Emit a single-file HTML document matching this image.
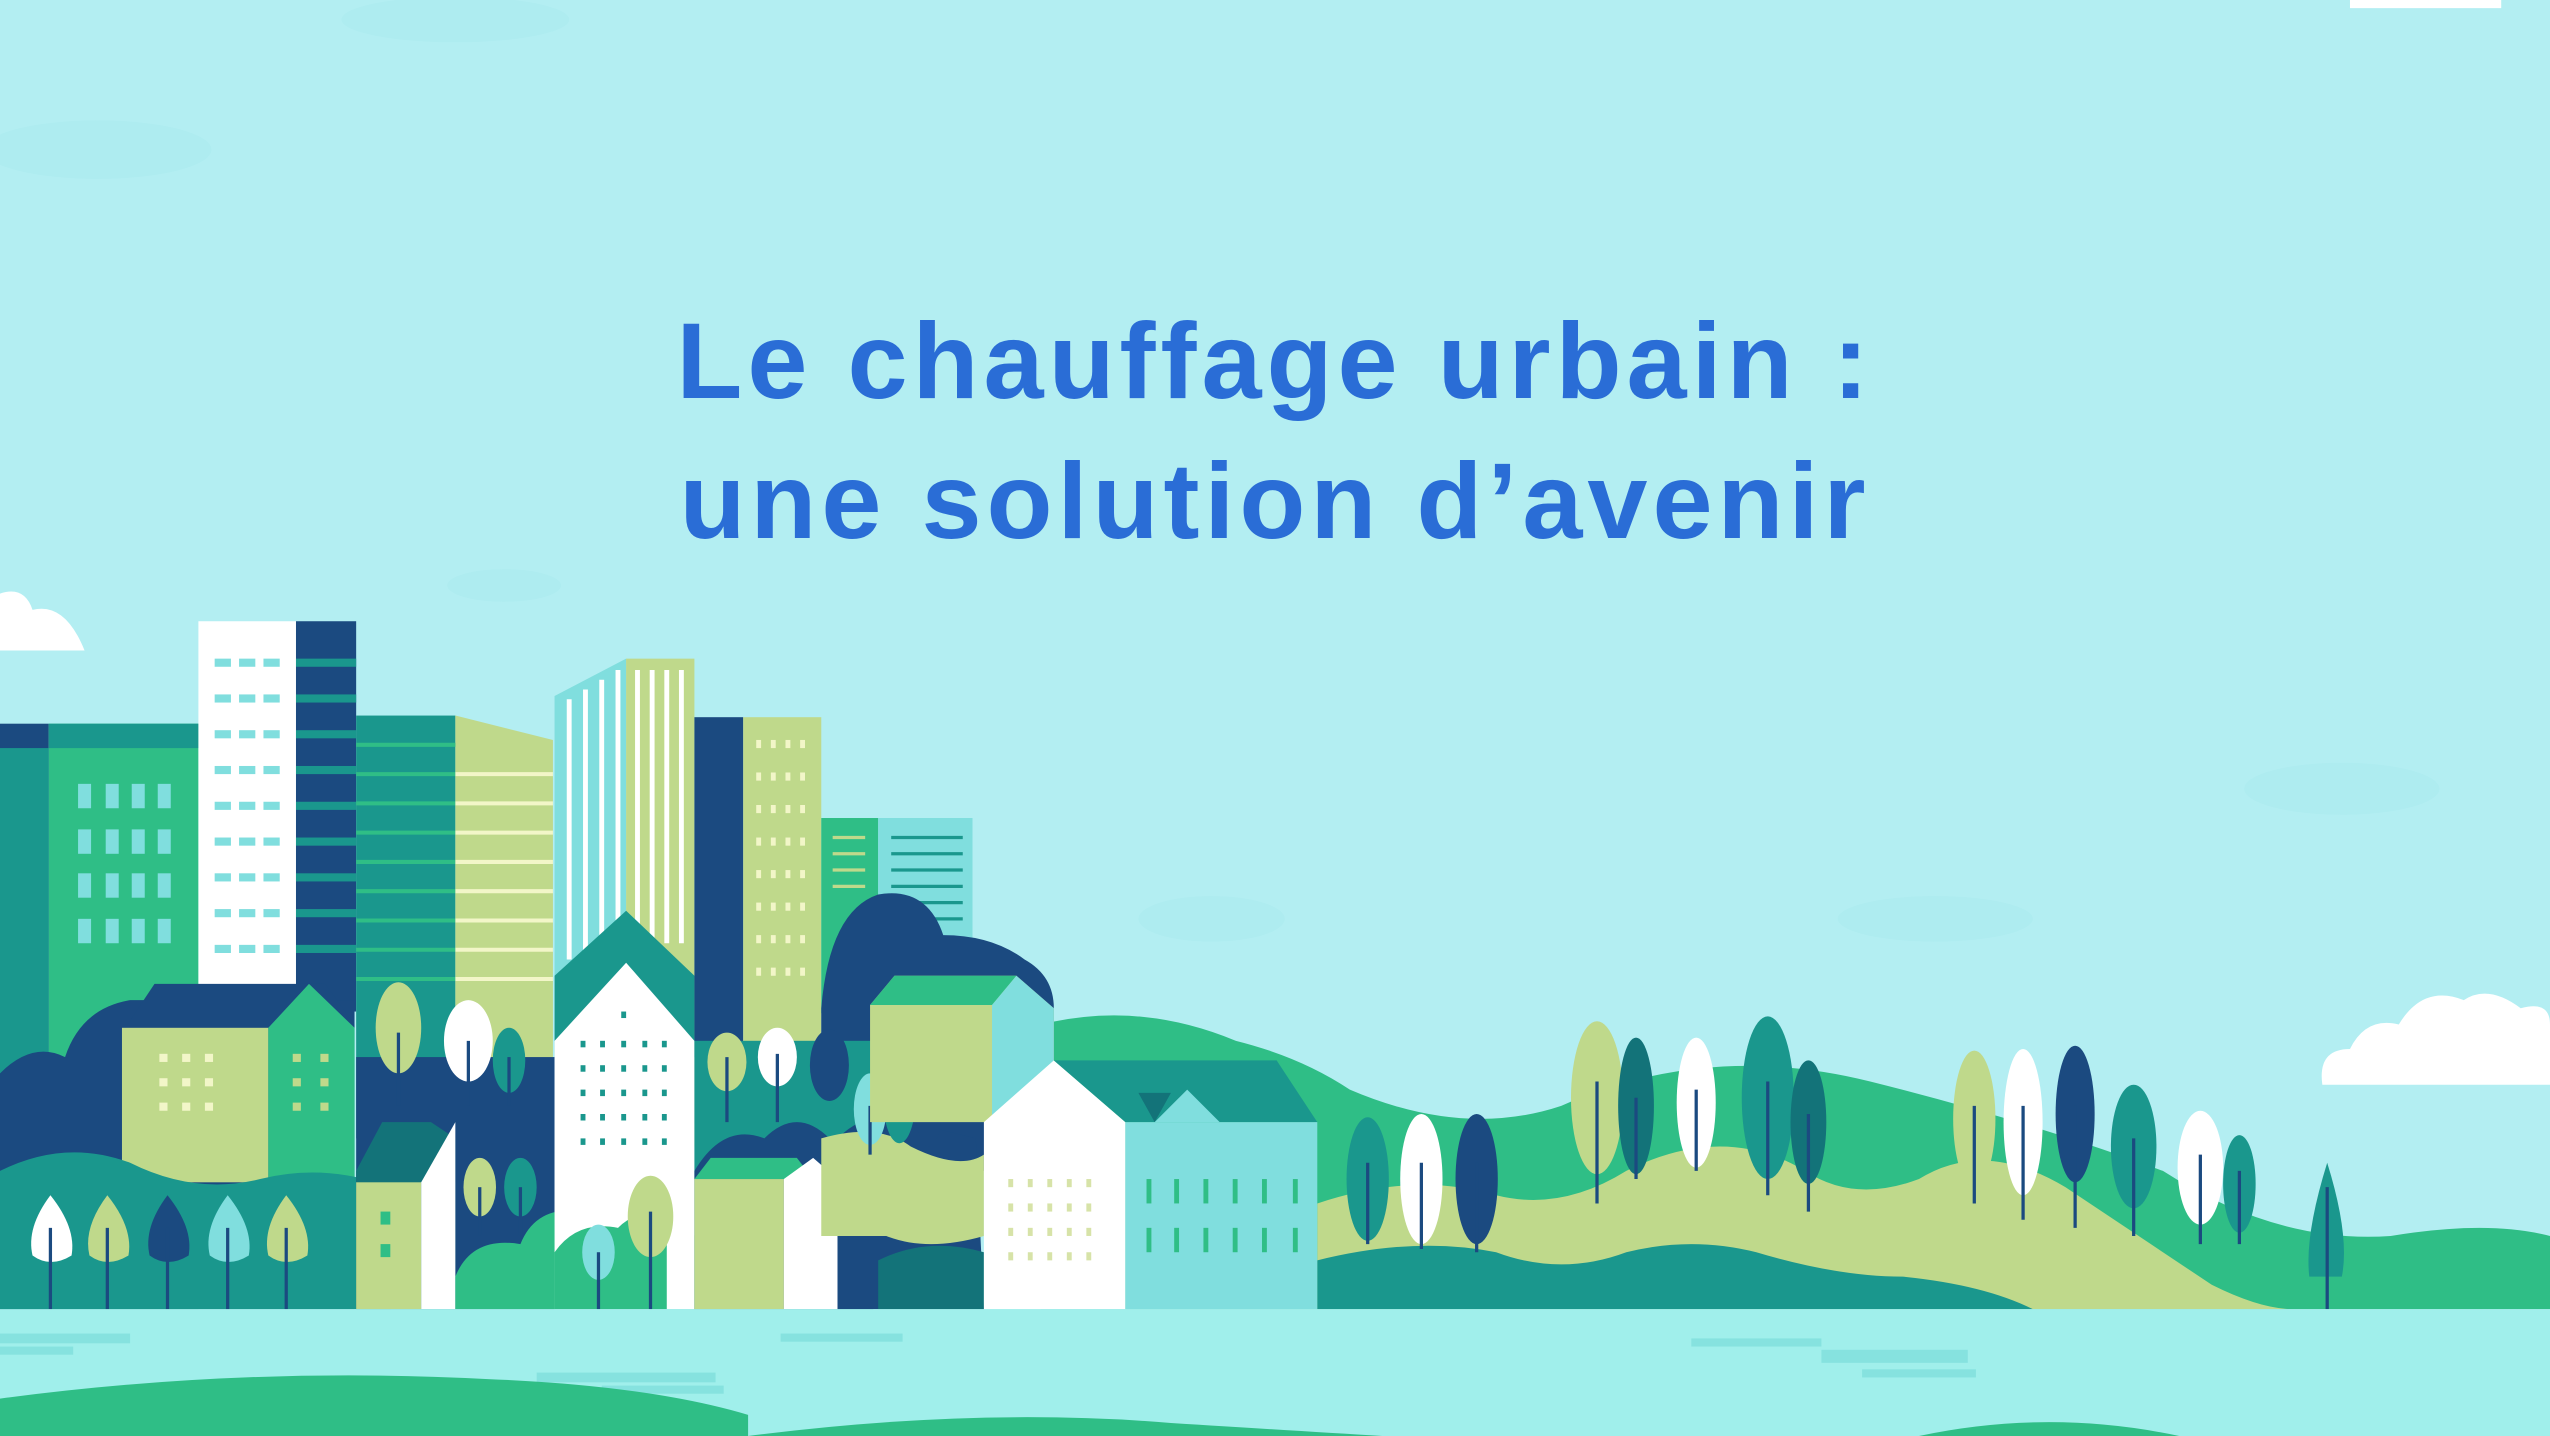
<!DOCTYPE html>
<html><head><meta charset="utf-8"><style>
html,body{margin:0;padding:0;width:2550px;height:1436px;overflow:hidden;background:#b3eef2}
svg{position:absolute;left:0;top:0}
.tr line{stroke:#1b4a80;stroke-width:2}
.t{position:absolute;left:0;width:2550px;text-align:center;font-family:"Liberation Sans",sans-serif;font-weight:bold;color:#2a6dd6;font-size:108px;letter-spacing:5px}
</style></head><body>
<svg width="2550" height="1436" viewBox="0 0 1568 883" preserveAspectRatio="none">
<rect width="1568" height="883" fill="#b3eef2"/>
<g fill="#aeecf0"><ellipse cx="60" cy="92" rx="70" ry="18"/><ellipse cx="280" cy="12" rx="70" ry="14"/><ellipse cx="1440" cy="485" rx="60" ry="16"/><ellipse cx="1190" cy="565" rx="60" ry="14"/><ellipse cx="745" cy="565" rx="45" ry="14"/><ellipse cx="310" cy="360" rx="35" ry="10"/></g>
<g fill="#fff"><path d="M0 400 L0 365 Q15 360 20 375 Q40 370 52 400Z"/><path d="M1428 667 Q1425 645 1445 645 Q1455 625 1475 630 Q1490 605 1515 615 Q1530 605 1550 620 Q1568 615 1568 630 L1568 667Z"/><rect x="1445" y="0" width="93" height="5"/></g>
<path d="M640 630 Q700 615 760 640 Q800 650 830 670 Q900 700 960 680 Q1050 640 1150 665 Q1250 690 1330 720 Q1400 765 1470 760 Q1530 750 1568 760 L1568 805 L640 805Z" fill="#2fbe86"/>
<path d="M810 740 Q870 720 920 735 Q960 745 1000 720 Q1060 690 1110 720 Q1140 740 1180 725 Q1220 700 1270 730 Q1330 770 1360 790 Q1390 805 1410 805 L810 805Z" fill="#bfd98b"/>
<path d="M810 775 Q870 760 920 770 Q960 785 1000 770 Q1040 760 1080 770 Q1130 785 1170 785 Q1220 790 1250 805 L810 805Z" fill="#1a978d"/>
<g class="tr">
<g><ellipse cx="841" cy="725" rx="13" ry="38" fill="#1a978d"/><line x1="841" y1="715" x2="841" y2="765"/></g>
<g><ellipse cx="874" cy="725" rx="13" ry="40" fill="#fff"/><line x1="874" y1="715" x2="874" y2="768"/></g>
<g><ellipse cx="908" cy="725" rx="13" ry="40" fill="#1b4a80"/><line x1="908" y1="715" x2="908" y2="770"/></g>
<g><ellipse cx="982" cy="675" rx="16" ry="47" fill="#bfd98b"/><line x1="982" y1="665" x2="982" y2="740"/></g>
<g><ellipse cx="1006" cy="680" rx="11" ry="42" fill="#137379"/><line x1="1006" y1="675" x2="1006" y2="725"/></g>
<g><ellipse cx="1043" cy="678" rx="12" ry="40" fill="#fff"/><line x1="1043" y1="670" x2="1043" y2="720"/></g>
<g><ellipse cx="1087" cy="675" rx="16" ry="50" fill="#1a978d"/><line x1="1087" y1="665" x2="1087" y2="735"/></g>
<g><ellipse cx="1112" cy="690" rx="11" ry="38" fill="#137379"/><line x1="1112" y1="685" x2="1112" y2="745"/></g>
<g><ellipse cx="1214" cy="688" rx="13" ry="42" fill="#bfd98b"/><line x1="1214" y1="680" x2="1214" y2="740"/></g>
<g><ellipse cx="1244" cy="690" rx="12" ry="45" fill="#fff"/><line x1="1244" y1="680" x2="1244" y2="750"/></g>
<g><ellipse cx="1276" cy="685" rx="12" ry="42" fill="#1b4a80"/><line x1="1276" y1="680" x2="1276" y2="755"/></g>
<g><ellipse cx="1312" cy="705" rx="14" ry="38" fill="#1a978d"/><line x1="1312" y1="700" x2="1312" y2="760"/></g>
<g><ellipse cx="1353" cy="718" rx="14" ry="35" fill="#fff"/><line x1="1353" y1="710" x2="1353" y2="765"/></g>
<g><ellipse cx="1377" cy="728" rx="10" ry="30" fill="#1a978d"/><line x1="1377" y1="720" x2="1377" y2="765"/></g>
<g><path d="M1431 715 Q1445 760 1440 785 L1420 785 Q1417 760 1431 715Z" fill="#1a978d"/><line x1="1431" y1="730" x2="1431" y2="805"/></g>
</g>
<rect x="0" y="445" width="30" height="360" fill="#1b4a80"/>
<rect x="0" y="460" width="30" height="345" fill="#1a978d"/>
<rect x="30" y="445" width="92" height="360" fill="#2fbe86"/>
<rect x="30" y="445" width="92" height="15" fill="#1a978d"/>
<g fill="#80dede">
<rect x="48" y="482" width="8" height="15"/><rect x="65" y="482" width="8" height="15"/><rect x="81" y="482" width="8" height="15"/><rect x="97" y="482" width="8" height="15"/>
<rect x="48" y="510" width="8" height="15"/><rect x="65" y="510" width="8" height="15"/><rect x="81" y="510" width="8" height="15"/><rect x="97" y="510" width="8" height="15"/>
<rect x="48" y="537" width="8" height="15"/><rect x="65" y="537" width="8" height="15"/><rect x="81" y="537" width="8" height="15"/><rect x="97" y="537" width="8" height="15"/>
<rect x="48" y="565" width="8" height="15"/><rect x="65" y="565" width="8" height="15"/><rect x="81" y="565" width="8" height="15"/><rect x="97" y="565" width="8" height="15"/>
</g>
<rect x="122" y="382" width="60" height="240" fill="#fff"/>
<g fill="#80dede" id="w"><rect x="132" y="405" width="10" height="5"/><rect x="147" y="405" width="10" height="5"/><rect x="162" y="405" width="10" height="5"/></g>
<use href="#w" y="22"/><use href="#w" y="44"/><use href="#w" y="66"/><use href="#w" y="88"/><use href="#w" y="110"/><use href="#w" y="132"/><use href="#w" y="154"/><use href="#w" y="176"/>
<rect x="182" y="382" width="37" height="240" fill="#1b4a80"/>
<g fill="#1a978d"><rect x="182" y="405" width="37" height="5"/><rect x="182" y="427" width="37" height="5"/><rect x="182" y="449" width="37" height="5"/><rect x="182" y="471" width="37" height="5"/><rect x="182" y="493" width="37" height="5"/><rect x="182" y="515" width="37" height="5"/><rect x="182" y="537" width="37" height="5"/><rect x="182" y="559" width="37" height="5"/><rect x="182" y="581" width="37" height="5"/></g>
<rect x="219" y="440" width="61" height="260" fill="#1a978d"/>
<path d="M280 440 L340 455 L340 700 L280 700Z" fill="#bfd98b"/>
<g stroke="#2fbe86" stroke-width="2.5"><line x1="219" y1="458" x2="280" y2="458"/><line x1="219" y1="476" x2="280" y2="476"/><line x1="219" y1="494" x2="280" y2="494"/><line x1="219" y1="512" x2="280" y2="512"/><line x1="219" y1="530" x2="280" y2="530"/><line x1="219" y1="548" x2="280" y2="548"/><line x1="219" y1="566" x2="280" y2="566"/><line x1="219" y1="584" x2="280" y2="584"/><line x1="219" y1="602" x2="280" y2="602"/></g>
<g stroke="#f2f6c8" stroke-width="2.5"><line x1="280" y1="476" x2="340" y2="476"/><line x1="280" y1="494" x2="340" y2="494"/><line x1="280" y1="512" x2="340" y2="512"/><line x1="280" y1="530" x2="340" y2="530"/><line x1="280" y1="548" x2="340" y2="548"/><line x1="280" y1="566" x2="340" y2="566"/><line x1="280" y1="584" x2="340" y2="584"/><line x1="280" y1="602" x2="340" y2="602"/></g>
<path d="M341 428 L385 405 L385 600 L341 600Z" fill="#80dede"/>
<g stroke="#fff" stroke-width="3"><line x1="350" y1="430" x2="350" y2="590"/><line x1="360" y1="424" x2="360" y2="590"/><line x1="370" y1="418" x2="370" y2="590"/><line x1="380" y1="412" x2="380" y2="590"/></g>
<rect x="385" y="405" width="42" height="300" fill="#bfd98b"/>
<g stroke="#fff" stroke-width="3"><line x1="392" y1="412" x2="392" y2="580"/><line x1="401" y1="412" x2="401" y2="580"/><line x1="410" y1="412" x2="410" y2="580"/><line x1="419" y1="412" x2="419" y2="580"/></g>
<path d="M341 600 L385 560 L427 600 L427 650 L341 650Z" fill="#1a978d"/>
<rect x="427" y="441" width="30" height="250" fill="#1b4a80"/>
<rect x="457" y="441" width="48" height="200" fill="#bfd98b"/>
<g fill="#f2f6c8"><rect x="465" y="455" width="3" height="5"/><rect x="474" y="455" width="3" height="5"/><rect x="483" y="455" width="3" height="5"/><rect x="492" y="455" width="3" height="5"/>
<rect x="465" y="475" width="3" height="5"/><rect x="474" y="475" width="3" height="5"/><rect x="483" y="475" width="3" height="5"/><rect x="492" y="475" width="3" height="5"/>
<rect x="465" y="495" width="3" height="5"/><rect x="474" y="495" width="3" height="5"/><rect x="483" y="495" width="3" height="5"/><rect x="492" y="495" width="3" height="5"/>
<rect x="465" y="515" width="3" height="5"/><rect x="474" y="515" width="3" height="5"/><rect x="483" y="515" width="3" height="5"/><rect x="492" y="515" width="3" height="5"/>
<rect x="465" y="535" width="3" height="5"/><rect x="474" y="535" width="3" height="5"/><rect x="483" y="535" width="3" height="5"/><rect x="492" y="535" width="3" height="5"/>
<rect x="465" y="555" width="3" height="5"/><rect x="474" y="555" width="3" height="5"/><rect x="483" y="555" width="3" height="5"/><rect x="492" y="555" width="3" height="5"/>
<rect x="465" y="575" width="3" height="5"/><rect x="474" y="575" width="3" height="5"/><rect x="483" y="575" width="3" height="5"/><rect x="492" y="575" width="3" height="5"/>
<rect x="465" y="595" width="3" height="5"/><rect x="474" y="595" width="3" height="5"/><rect x="483" y="595" width="3" height="5"/><rect x="492" y="595" width="3" height="5"/></g>
<rect x="505" y="503" width="35" height="120" fill="#2fbe86"/>
<rect x="540" y="503" width="58" height="100" fill="#80dede"/>
<g stroke="#1a978d" stroke-width="2"><line x1="548" y1="515" x2="592" y2="515"/><line x1="548" y1="525" x2="592" y2="525"/><line x1="548" y1="535" x2="592" y2="535"/><line x1="548" y1="545" x2="592" y2="545"/><line x1="548" y1="555" x2="592" y2="555"/><line x1="548" y1="565" x2="592" y2="565"/></g>
<g stroke="#bfd98b" stroke-width="2"><line x1="512" y1="515" x2="532" y2="515"/><line x1="512" y1="525" x2="532" y2="525"/><line x1="512" y1="535" x2="532" y2="535"/><line x1="512" y1="545" x2="532" y2="545"/></g>
<path d="M505 620 Q510 560 540 550 Q570 545 580 575 Q610 575 630 590 Q648 600 648 620 L648 720 L505 720Z" fill="#1b4a80"/>
<path d="M0 805 L0 660 Q20 640 40 650 Q50 620 80 615 L218 615 L218 805Z" fill="#1b4a80"/>
<path d="M75 635 L95 605 L200 605 L218 630 L218 725 L75 725Z" fill="#1b4a80"/>
<rect x="75" y="632" width="90" height="95" fill="#bfd98b"/>
<path d="M165 632 L190 605 L218 632 L218 725 L165 725Z" fill="#2fbe86"/>
<g fill="#f2f6c8"><rect x="98" y="648" width="5" height="5"/><rect x="112" y="648" width="5" height="5"/><rect x="126" y="648" width="5" height="5"/><rect x="98" y="663" width="5" height="5"/><rect x="112" y="663" width="5" height="5"/><rect x="126" y="663" width="5" height="5"/><rect x="98" y="678" width="5" height="5"/><rect x="112" y="678" width="5" height="5"/><rect x="126" y="678" width="5" height="5"/></g>
<g fill="#bfd98b"><rect x="180" y="648" width="5" height="5"/><rect x="197" y="648" width="5" height="5"/><rect x="180" y="663" width="5" height="5"/><rect x="197" y="663" width="5" height="5"/><rect x="180" y="678" width="5" height="5"/><rect x="197" y="678" width="5" height="5"/></g>
<path d="M0 805 L0 720 Q40 700 80 715 Q120 735 160 725 Q200 715 240 730 L240 805Z" fill="#1a978d"/>
<g class="tr">
<g><path d="M31 735 Q47 755 44 772 Q31 780 20 772 Q16 755 31 735Z" fill="#fff"/><line x1="31" y1="755" x2="31" y2="805"/></g>
<g><path d="M66 735 Q82 755 79 772 Q66 780 55 772 Q51 755 66 735Z" fill="#bfd98b"/><line x1="66" y1="755" x2="66" y2="805"/></g>
<g><path d="M103 735 Q119 755 116 772 Q103 780 92 772 Q88 755 103 735Z" fill="#1b4a80"/><line x1="103" y1="755" x2="103" y2="805"/></g>
<g><path d="M140 735 Q156 755 153 772 Q140 780 129 772 Q125 755 140 735Z" fill="#80dede"/><line x1="140" y1="755" x2="140" y2="805"/></g>
<g><path d="M176 735 Q192 755 189 772 Q176 780 165 772 Q161 755 176 735Z" fill="#bfd98b"/><line x1="176" y1="755" x2="176" y2="805"/></g>
</g>
<rect x="219" y="650" width="122" height="155" fill="#1b4a80"/>
<path d="M219 720 L235 690 L265 690 L280 700 L280 805 L219 805Z" fill="#137379"/>
<rect x="219" y="727" width="40" height="78" fill="#bfd98b"/>
<path d="M259 727 L280 690 L280 805 L259 805Z" fill="#fff"/>
<g fill="#2fbe86"><rect x="234" y="745" width="6" height="8"/><rect x="234" y="765" width="6" height="8"/></g>
<g class="tr">
<g><ellipse cx="245" cy="632" rx="14" ry="28" fill="#bfd98b"/><line x1="245" y1="635" x2="245" y2="680"/></g>
<g><ellipse cx="288" cy="640" rx="15" ry="25" fill="#fff"/><line x1="288" y1="640" x2="288" y2="680"/></g>
<g><ellipse cx="313" cy="652" rx="10" ry="20" fill="#1a978d"/><line x1="313" y1="650" x2="313" y2="680"/></g>
<g><ellipse cx="295" cy="730" rx="10" ry="18" fill="#bfd98b"/><line x1="295" y1="730" x2="295" y2="760"/></g>
<g><ellipse cx="320" cy="730" rx="10" ry="18" fill="#1a978d"/><line x1="320" y1="730" x2="320" y2="760"/></g>
</g>
<path d="M280 805 L280 785 Q290 760 320 765 Q330 740 360 745 Q380 730 400 745 Q420 740 427 760 L427 805Z" fill="#2fbe86"/>
<path d="M341 640 L385 592 L427 640 L427 805 L341 805Z" fill="#fff"/>
<g fill="#1a978d"><rect x="382" y="622" width="3" height="4"/>
<rect x="357" y="640" width="3" height="4"/><rect x="369" y="640" width="3" height="4"/><rect x="382" y="640" width="3" height="4"/><rect x="395" y="640" width="3" height="4"/><rect x="407" y="640" width="3" height="4"/>
<rect x="357" y="655" width="3" height="4"/><rect x="369" y="655" width="3" height="4"/><rect x="382" y="655" width="3" height="4"/><rect x="395" y="655" width="3" height="4"/><rect x="407" y="655" width="3" height="4"/>
<rect x="357" y="670" width="3" height="4"/><rect x="369" y="670" width="3" height="4"/><rect x="382" y="670" width="3" height="4"/><rect x="395" y="670" width="3" height="4"/><rect x="407" y="670" width="3" height="4"/>
<rect x="357" y="685" width="3" height="4"/><rect x="369" y="685" width="3" height="4"/><rect x="382" y="685" width="3" height="4"/><rect x="395" y="685" width="3" height="4"/><rect x="407" y="685" width="3" height="4"/>
<rect x="357" y="700" width="3" height="4"/><rect x="369" y="700" width="3" height="4"/><rect x="382" y="700" width="3" height="4"/><rect x="395" y="700" width="3" height="4"/><rect x="407" y="700" width="3" height="4"/></g>
<path d="M341 805 L341 770 Q355 750 380 755 Q395 740 410 755 L410 805Z" fill="#2fbe86"/>
<g class="tr"><g><ellipse cx="368" cy="770" rx="10" ry="17" fill="#80dede"/><line x1="368" y1="770" x2="368" y2="805"/></g><g><ellipse cx="400" cy="748" rx="14" ry="25" fill="#bfd98b"/><line x1="400" y1="745" x2="400" y2="805"/></g></g>
<rect x="427" y="640" width="110" height="165" fill="#1a978d"/>
<path d="M427 720 Q445 690 470 700 Q490 680 510 700 L537 720 L537 805 L427 805Z" fill="#1b4a80"/>
<g class="tr">
<g><ellipse cx="447" cy="653" rx="12" ry="18" fill="#bfd98b"/><line x1="447" y1="650" x2="447" y2="690"/></g>
<g><ellipse cx="478" cy="650" rx="12" ry="18" fill="#fff"/><line x1="478" y1="648" x2="478" y2="690"/></g>
<g><ellipse cx="510" cy="655" rx="12" ry="22" fill="#1b4a80"/></g>
</g>
<path d="M427 725 L437 712 L490 712 L500 725Z" fill="#2fbe86"/>
<rect x="427" y="725" width="55" height="80" fill="#bfd98b"/>
<path d="M482 725 L500 712 L515 725 L515 805 L482 805Z" fill="#fff"/>
<path d="M515 805 L515 700 Q535 680 560 690 L600 700 L605 805Z" fill="#1b4a80"/>
<path d="M505 700 Q540 690 560 705 Q590 720 605 710 L605 760 Q570 770 545 760 L505 760Z" fill="#bfd98b"/>
<path d="M540 805 L540 775 Q570 760 605 770 L605 805Z" fill="#137379"/>
<g class="tr"><g><ellipse cx="535" cy="682" rx="10" ry="22" fill="#80dede"/><line x1="535" y1="680" x2="535" y2="710"/></g><g><ellipse cx="553" cy="675" rx="10" ry="28" fill="#1a978d"/></g><g><ellipse cx="571" cy="683" rx="8" ry="22" fill="#1b4a80"/></g></g>
<path d="M535 618 L550 600 L625 600 L648 620 L648 690 L535 690Z" fill="#bfd98b"/>
<path d="M535 618 L550 600 L625 600 L610 618Z" fill="#2fbe86"/>
<path d="M610 618 L625 600 L648 620 L648 690 L610 690Z" fill="#80dede"/>
<path d="M605 690 L648 652 L692 690 L692 805 L605 805Z" fill="#fff"/>
<g fill="#d7e3a8"><rect x="620" y="725" width="3" height="5"/><rect x="632" y="725" width="3" height="5"/><rect x="644" y="725" width="3" height="5"/><rect x="656" y="725" width="3" height="5"/><rect x="668" y="725" width="3" height="5"/>
<rect x="620" y="740" width="3" height="5"/><rect x="632" y="740" width="3" height="5"/><rect x="644" y="740" width="3" height="5"/><rect x="656" y="740" width="3" height="5"/><rect x="668" y="740" width="3" height="5"/>
<rect x="620" y="755" width="3" height="5"/><rect x="632" y="755" width="3" height="5"/><rect x="644" y="755" width="3" height="5"/><rect x="656" y="755" width="3" height="5"/><rect x="668" y="755" width="3" height="5"/>
<rect x="620" y="770" width="3" height="5"/><rect x="632" y="770" width="3" height="5"/><rect x="644" y="770" width="3" height="5"/><rect x="656" y="770" width="3" height="5"/><rect x="668" y="770" width="3" height="5"/></g>
<path d="M648 652 L785 652 L810 690 L692 690Z" fill="#1a978d"/>
<path d="M700 672 L720 672 L710 690Z" fill="#137379"/>
<rect x="692" y="690" width="118" height="115" fill="#80dede"/>
<path d="M710 690 L730 670 L750 690Z" fill="#80dede"/>
<g fill="#2fbe86"><rect x="705" y="725" width="3" height="15"/><rect x="722" y="725" width="3" height="15"/><rect x="740" y="725" width="3" height="15"/><rect x="758" y="725" width="3" height="15"/><rect x="776" y="725" width="3" height="15"/><rect x="795" y="725" width="3" height="15"/>
<rect x="705" y="755" width="3" height="15"/><rect x="722" y="755" width="3" height="15"/><rect x="740" y="755" width="3" height="15"/><rect x="758" y="755" width="3" height="15"/><rect x="776" y="755" width="3" height="15"/><rect x="795" y="755" width="3" height="15"/></g>
<rect x="0" y="805" width="1568" height="78" fill="#a0efeb"/>
<g fill="#86e2df"><rect x="0" y="820" width="80" height="6"/><rect x="0" y="828" width="45" height="5"/><rect x="480" y="820" width="75" height="5"/><rect x="330" y="844" width="110" height="6"/><rect x="370" y="852" width="75" height="5"/><rect x="1040" y="823" width="80" height="5"/><rect x="1120" y="830" width="90" height="8"/><rect x="1145" y="842" width="70" height="5"/></g>
<path d="M0 860 Q150 840 300 848 Q400 852 460 870 L460 883 L0 883Z" fill="#2fbe86"/>
<path d="M460 883 Q600 865 720 875 Q800 880 850 883Z" fill="#2fbe86"/>
<path d="M1180 883 Q1260 866 1340 883Z" fill="#2fbe86"/>
</svg>
<div class="t" style="top:298px">Le chauffage urbain :</div>
<div class="t" style="top:438px">une solution d’avenir</div>
</body></html>
